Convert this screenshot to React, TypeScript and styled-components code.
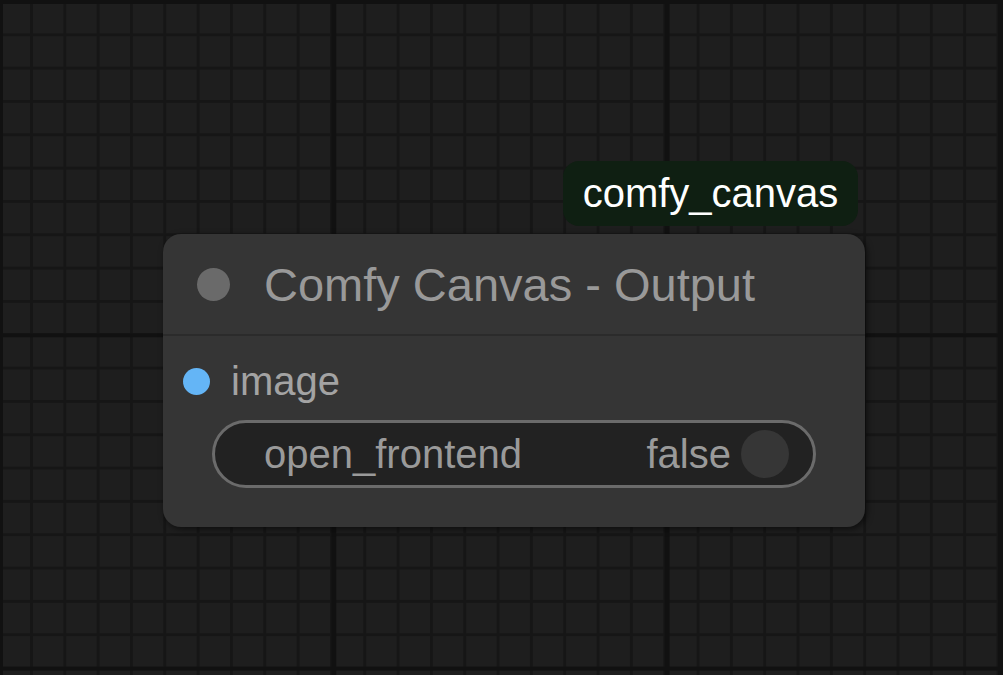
import React from 'react';
import styled, { createGlobalStyle } from 'styled-components';

const GlobalStyle = createGlobalStyle`
  html, body {
    margin: 0;
    padding: 0;
    width: 100%;
    height: 100%;
    overflow: hidden;
    background: #1d1d1d;
  }

  #root {
    height: 100%;
  }
`;

function App() {
  return (
    <>
      <GlobalStyle />
      <Canvas>
        <Node style={{ left: 163, top: 234 }}>
          <Badge>comfy_canvas</Badge>

          <TitleBar>
            <StatusDot />
            <Title>Comfy Canvas - Output</Title>
          </TitleBar>

          <Body>
            <SlotRow>
              <SlotDot color="#64b5f6" />
              <SlotLabel>image</SlotLabel>
            </SlotRow>

            <Toggle>
              <ToggleName>open_frontend</ToggleName>
              <ToggleValue>false</ToggleValue>
              <Knob />
            </Toggle>
          </Body>
        </Node>
      </Canvas>
    </>
  );
}

const Canvas = styled.div`
  position: relative;
  width: 100%;
  height: 100%;
  font-family: 'Liberation Sans', Arial, sans-serif;
  background-color: #1e1e1e;
  background-image:
    linear-gradient(to right, #111111 0 5px, transparent 5px),
    linear-gradient(to bottom, #111111 0 4px, transparent 4px),
    linear-gradient(to right, #161616 0 3px, transparent 3px),
    linear-gradient(to bottom, #161616 0 3px, transparent 3px);
  background-size:
    333.33px 100%,
    100% 333.33px,
    33.333px 100%,
    100% 33.333px;
  background-position:
    -2px 0,
    0 0,
    30px 0,
    0 0;
`;

const Node = styled.div`
  position: absolute;
  width: 702px;
  height: 293px;
  box-sizing: border-box;
  background: #353535;
  border-radius: 18px;
  box-shadow: 2px 2px 6px rgba(0, 0, 0, 0.55);
  display: flex;
  flex-direction: column;
`;

const Badge = styled.div`
  position: absolute;
  top: -73px;
  right: 7px;
  width: 295px;
  height: 65px;
  box-sizing: border-box;
  border-radius: 16px;
  background: #0f1f12;
  color: #ffffff;
  font-size: 40px;
  display: flex;
  align-items: center;
  justify-content: center;
`;

const TitleBar = styled.div`
  height: 100px;
  display: flex;
  align-items: center;
  padding-left: 34px;
  gap: 34px;
  border-bottom: 2px solid #2b2b2b;
`;

const StatusDot = styled.div`
  width: 33px;
  height: 33px;
  border-radius: 50%;
  background: #6a6a6a;
  flex-shrink: 0;
`;

const Title = styled.div`
  font-size: 47px;
  color: #999999;
  white-space: nowrap;
`;

const Body = styled.div`
  display: flex;
  flex-direction: column;
  padding: 20px 49px 39px 20px;
`;

const SlotRow = styled.div`
  height: 50px;
  display: flex;
  align-items: center;
  gap: 21px;
`;

const SlotDot = styled.div<{ color: string }>`
  width: 27px;
  height: 27px;
  border-radius: 50%;
  background: ${({ color }) => color};
  flex-shrink: 0;
`;

const SlotLabel = styled.div`
  font-size: 40px;
  color: #a3a3a3;
`;

const Toggle = styled.div`
  margin: 14px 0 0 29px;
  height: 68px;
  box-sizing: border-box;
  border: 3px solid #6b6b6b;
  border-radius: 34px;
  background: #222222;
  display: flex;
  align-items: center;
  padding: 0 24px 0 49px;
`;

const ToggleName = styled.div`
  flex: 1;
  font-size: 40px;
  color: #9a9a9a;
`;

const ToggleValue = styled.div`
  font-size: 40px;
  color: #9a9a9a;
  margin-right: 10px;
`;

const Knob = styled.div`
  width: 48px;
  height: 48px;
  border-radius: 50%;
  background: #363636;
`;

export default App;
